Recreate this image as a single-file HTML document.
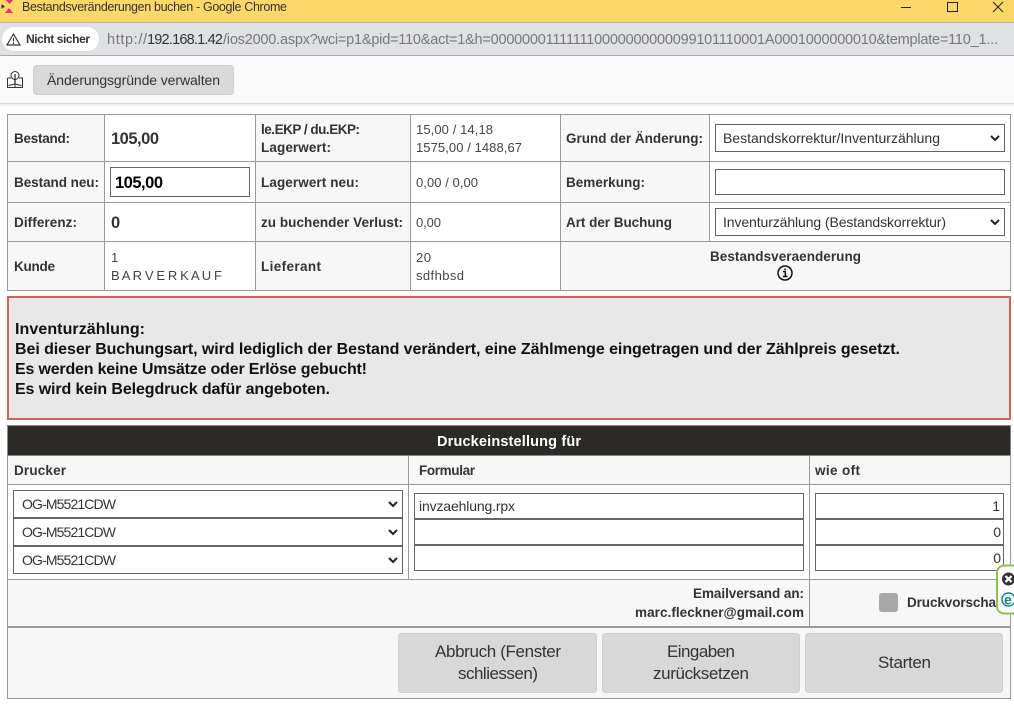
<!DOCTYPE html>
<html lang="de"><head><meta charset="utf-8"><title>Bestandsveränderungen buchen - Google Chrome</title>
<style>
html,body{margin:0;padding:0;background:#fff;width:1014px;height:710px;overflow:hidden}
svg{display:block}
text{font-family:"Liberation Sans",Arial,sans-serif;white-space:pre}
.l{font-weight:bold;font-size:13.5px;fill:#333}
.v{font-size:13px;fill:#444}
.s{font-size:14px;fill:#333}
.b{font-weight:bold;font-size:16px;fill:#111}
.bt{font-size:17px;fill:#333}
.ln{stroke:#9a9a9a;stroke-width:1;fill:none}
.box{fill:#fff;stroke:#666;stroke-width:1}
.chev{fill:none;stroke:#222;stroke-width:2}
.btn{fill:#d8d8d8;stroke:#cfcfcf;stroke-width:1}
</style></head><body>
<svg xmlns="http://www.w3.org/2000/svg" width="1014" height="710" viewBox="0 0 1014 710">
<rect width="1014" height="710" fill="#fff"/>
<!-- title bar -->
<rect width="1014" height="22" fill="#fdd868"/>
<rect y="22" width="1014" height="1" fill="#b9b5a0"/>
<path d="M6 0H13L9.500 4Z M5 13L9 8L13 13Z" fill="#e8336e"/>
<path d="M1.500 4L5 6.500L1.500 9Z" fill="#333"/>
<text x="22" y="11" font-size="12.500" fill="#333" textLength="265" lengthAdjust="spacing">Bestandsveränderungen buchen - Google Chrome</text>
<path d="M901 7.500H911M947.500 2.500H957.500V11.500H947.500Z M993 2L1003 12M1003 2L993 12" fill="none" stroke="#222" stroke-width="1"/>
<!-- address bar -->
<rect y="23" width="1014" height="32" fill="#dfe1e5"/>
<rect y="55" width="1014" height="1" fill="#a9a9a9"/>
<rect x="2" y="27" width="97" height="24" rx="12" fill="#fff"/>
<path d="M13.500 34L20 45H7Z M13.500 38V41.500M13.500 42.500V44" fill="none" stroke="#333" stroke-width="1.200"/>
<text x="26" y="43" font-size="12" font-weight="bold" fill="#333" textLength="64" lengthAdjust="spacing">Nicht sicher</text>
<text x="107" y="44" font-size="14.500" fill="#777" textLength="40" lengthAdjust="spacing">http://</text>
<text x="147" y="44" font-size="14.500" fill="#333" textLength="76" lengthAdjust="spacing">192.168.1.42</text>
<text x="223" y="44" font-size="14.500" fill="#777" textLength="775" lengthAdjust="spacing">/ios2000.aspx?wci=p1&amp;pid=110&amp;act=1&amp;h=000000011111110000000000099101110001A0001000000010&amp;template=110_1...</text>
<!-- toolbar -->
<rect y="56" width="1014" height="47" fill="#fafafa"/>
<rect y="103" width="1014" height="1" fill="#d8d8d8"/>
<rect y="104" width="1014" height="2" fill="#f0f0f0"/>
<g fill="none" stroke="#333" stroke-width="1">
<path d="M7.500 78V87.500H22.500V78H19M11 78H7.500M8.500 85.500L15 84L21.500 85.500M15 84V87"/>
<circle cx="15" cy="75.500" r="4"/>
<path d="M15 74V84" stroke-width="1.300"/>
</g>
<rect x="33.500" y="65.500" width="200" height="29" rx="3" fill="#d9d9d9" stroke="#cfcfcf"/>
<text x="47" y="85" class="s" textLength="173" lengthAdjust="spacing">Änderungsgründe verwalten</text>
<!-- top table -->
<rect x="7" y="114" width="97" height="176" fill="#f7f7f7"/>
<rect x="255" y="114" width="155" height="176" fill="#f7f7f7"/>
<rect x="560" y="114" width="149" height="127" fill="#f7f7f7"/>
<rect x="560" y="241" width="450" height="49" fill="#f7f7f7"/>
<path class="ln" d="M7.500 114.500H1010.500V290.500H7.500Z M7.500 161.500H1010.500M7.500 202.500H1010.500M7.500 241.500H1010.500M104.500 114V290M255.500 114V290M410.500 114V290M560.500 114V290M709.500 114V241"/>

<text x="14" y="143" class="l" textLength="56" lengthAdjust="spacing">Bestand:</text>
<text x="111" y="144" font-size="16.500" font-weight="bold" fill="#333" textLength="48" lengthAdjust="spacing">105,00</text>
<text x="261" y="134" class="l" textLength="99" lengthAdjust="spacing">le.EKP / du.EKP:</text>
<text x="261" y="152" class="l" textLength="70" lengthAdjust="spacing">Lagerwert:</text>
<text x="416" y="134" class="v" textLength="77" lengthAdjust="spacing">15,00 / 14,18</text>
<text x="416" y="152" class="v" textLength="106" lengthAdjust="spacing">1575,00 / 1488,67</text>
<text x="566" y="143" class="l" textLength="137" lengthAdjust="spacing">Grund der Änderung:</text>
<rect class="box" x="715.500" y="124.500" width="289" height="27"/>
<text x="723" y="143" class="s" textLength="217" lengthAdjust="spacing">Bestandskorrektur/Inventurzählung</text>
<path class="chev" d="M991 136L995 140L999 136"/>

<text x="14" y="187" class="l" textLength="85" lengthAdjust="spacing">Bestand neu:</text>
<rect class="box" x="110.500" y="167.500" width="139" height="29"/>
<text x="115" y="188" font-size="16.500" font-weight="bold" fill="#000" textLength="48" lengthAdjust="spacing">105,00</text>
<text x="261" y="187" class="l" textLength="98" lengthAdjust="spacing">Lagerwert neu:</text>
<text x="416" y="187" class="v" textLength="62" lengthAdjust="spacing">0,00 / 0,00</text>
<text x="566" y="187" class="l" textLength="79" lengthAdjust="spacing">Bemerkung:</text>
<rect class="box" x="715.500" y="169.500" width="289" height="25"/>

<text x="14" y="227" class="l" textLength="63" lengthAdjust="spacing">Differenz:</text>
<text x="111" y="228" font-size="16.500" font-weight="bold" fill="#333" textLength="8" lengthAdjust="spacing">0</text>
<text x="261" y="227" class="l" textLength="142" lengthAdjust="spacing">zu buchender Verlust:</text>
<text x="416" y="227" class="v" textLength="25" lengthAdjust="spacing">0,00</text>
<text x="566" y="227" class="l" textLength="106" lengthAdjust="spacing">Art der Buchung</text>
<rect class="box" x="715.500" y="208.500" width="289" height="27"/>
<text x="723" y="227" class="s" textLength="223" lengthAdjust="spacing">Inventurzählung (Bestandskorrektur)</text>
<path class="chev" d="M991 220L995 224L999 220"/>

<text x="14" y="271" class="l" textLength="41" lengthAdjust="spacing">Kunde</text>
<text x="111" y="262" class="v">1</text>
<text x="111" y="280" class="v" textLength="111" lengthAdjust="spacing" font-size="12.500">B A R V E R K A U F</text>
<text x="261" y="271" class="l" textLength="60" lengthAdjust="spacing">Lieferant</text>
<text x="416" y="262" class="v" textLength="15" lengthAdjust="spacing">20</text>
<text x="416" y="280" class="v" textLength="48" lengthAdjust="spacing">sdfhbsd</text>
<text x="710" y="261" class="l" textLength="151" lengthAdjust="spacing">Bestandsveraenderung</text>
<circle cx="785" cy="273" r="7" fill="none" stroke="#111" stroke-width="1.500"/>
<path d="M783 271.500H785.300V276.500M782.800 276.500H787.500M785 268.500V270" fill="none" stroke="#111" stroke-width="1.500"/>

<!-- message -->
<rect x="8" y="297" width="1002" height="122" fill="#e8e8e8" stroke="#cd655b" stroke-width="2"/>
<text x="15" y="334" class="b" textLength="130" lengthAdjust="spacing">Inventurzählung:</text>
<text x="15" y="354" class="b" textLength="885" lengthAdjust="spacing">Bei dieser Buchungsart, wird lediglich der Bestand verändert, eine Zählmenge eingetragen und der Zählpreis gesetzt.</text>
<text x="15" y="374" class="b" textLength="352" lengthAdjust="spacing">Es werden keine Umsätze oder Erlöse gebucht!</text>
<text x="15" y="394" class="b" textLength="315" lengthAdjust="spacing">Es wird kein Belegdruck dafür angeboten.</text>

<!-- print table -->
<rect x="7" y="455" width="1003" height="29" fill="#f7f7f7"/>
<rect x="7" y="579" width="1003" height="119" fill="#f7f7f7"/>
<rect x="7.500" y="425.500" width="1003" height="30" fill="#2b2a26" stroke="#888"/>
<text x="437" y="446" font-size="14.500" font-weight="bold" fill="#fff" textLength="144" lengthAdjust="spacing">Druckeinstellung für</text>
<path class="ln" d="M7.500 455V698.500H1010.500V455M7.500 484.500H1010.500M7.500 579.500H1010.500M408.500 455V579M809.500 455V627M7.500 698.500H1010.500"/>
<rect x="7" y="626" width="1004" height="2" fill="#9a9a9a"/>
<text x="14" y="475" class="l" textLength="52" lengthAdjust="spacing">Drucker</text>
<text x="419" y="475" class="l" textLength="56" lengthAdjust="spacing">Formular</text>
<text x="815" y="475" class="l" textLength="45" lengthAdjust="spacing">wie oft</text>

<rect class="box" x="13.500" y="490.500" width="389" height="27"/>
<rect class="box" x="13.500" y="518.500" width="389" height="27"/>
<rect class="box" x="13.500" y="546.500" width="389" height="27"/>
<text x="22" y="509" class="s" textLength="94" lengthAdjust="spacing">OG-M5521CDW</text>
<text x="22" y="537" class="s" textLength="94" lengthAdjust="spacing">OG-M5521CDW</text>
<text x="22" y="565" class="s" textLength="94" lengthAdjust="spacing">OG-M5521CDW</text>
<path class="chev" d="M389 502L393 506L397 502M389 530L393 534L397 530M389 558L393 562L397 558"/>

<rect class="box" x="414.500" y="493.500" width="389" height="25"/>
<rect class="box" x="414.500" y="519.500" width="389" height="25"/>
<rect class="box" x="414.500" y="545.500" width="389" height="25"/>
<text x="419" y="511" class="s" textLength="96" lengthAdjust="spacing">invzaehlung.rpx</text>
<rect class="box" x="815.500" y="493.500" width="188" height="25"/>
<rect class="box" x="815.500" y="519.500" width="188" height="25"/>
<rect class="box" x="815.500" y="545.500" width="188" height="25"/>
<text x="1000" y="511" class="s" text-anchor="end">1</text>
<text x="1001" y="537" class="s" text-anchor="end">0</text>
<text x="1001" y="563" class="s" text-anchor="end">0</text>

<text x="693" y="598" class="l" textLength="111" lengthAdjust="spacing">Emailversand an:</text>
<text x="635" y="617" class="l" textLength="169" lengthAdjust="spacing">marc.fleckner@gmail.com</text>
<rect x="879" y="593" width="19" height="19" rx="3" fill="#a8a8a8"/>
<text x="907" y="607" class="l" textLength="89" lengthAdjust="spacing">Druckvorscha</text>

<!-- extension widget -->
<rect x="997" y="565.500" width="30" height="48" rx="7" fill="#fff" stroke="#90c050" stroke-width="2"/>
<circle cx="1008.500" cy="579" r="6.500" fill="#333"/>
<path d="M1005.500 576L1011.500 582M1011.500 576L1005.500 582" stroke="#fff" stroke-width="2.200"/>
<circle cx="1008.500" cy="599.500" r="6.500" fill="#fff" stroke="#0f8a8a" stroke-width="1.500"/>
<text x="1004" y="604.500" font-size="14" font-weight="bold" fill="#0f8a8a">e</text>

<!-- buttons -->
<rect class="btn" x="398.500" y="633.500" width="198" height="59" rx="3"/>
<rect class="btn" x="602.500" y="633.500" width="197" height="59" rx="3"/>
<rect class="btn" x="805.500" y="633.500" width="197" height="59" rx="3"/>
<text x="435" y="657" class="bt" textLength="126" lengthAdjust="spacing">Abbruch (Fenster</text>
<text x="458" y="679" class="bt" textLength="80" lengthAdjust="spacing">schliessen)</text>
<text x="667" y="657" class="bt" textLength="68" lengthAdjust="spacing">Eingaben</text>
<text x="653" y="679" class="bt" textLength="96" lengthAdjust="spacing">zurücksetzen</text>
<text x="878" y="668" class="bt" textLength="53" lengthAdjust="spacing">Starten</text>
</svg>
</body></html>
